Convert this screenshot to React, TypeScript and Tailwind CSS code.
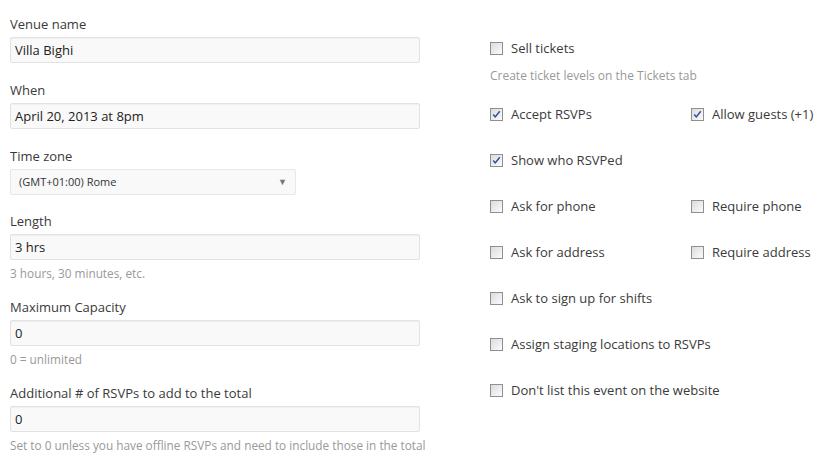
import React from 'react';

const font = { fontFamily: '"Open Sans", "Liberation Sans", sans-serif' };

interface FieldProps {
  label: string;
  value: string;
  help?: string;
}

const Field: React.FC<FieldProps> = ({ label, value, help }) => (
  <div className={help ? 'mb-[17px]' : 'mb-[18px]'}>
    <div className="text-[13px] leading-[18px] text-[#3a3a3a]">{label}</div>
    <div className="mt-[4px] h-[26px] w-[410px] rounded-[2px] border border-[#e2e2e2] bg-[#f9f9f9] px-[4px] text-[13px] leading-[24px] text-[#222] shadow-[inset_0_1px_1px_rgba(0,0,0,0.04)]">
      {value}
    </div>
    {help && (
      <div className="mt-[5px] whitespace-nowrap text-[11.8px] leading-[16px] text-[#999]">{help}</div>
    )}
  </div>
);

const Box: React.FC<{ checked?: boolean }> = ({ checked }) => (
  <span className="relative inline-block h-[13px] w-[13px] shrink-0 border border-[#8f8f8f] bg-gradient-to-br from-[#dcdcdc] to-[#fbfbfb]">
    {checked && (
      <svg viewBox="0 0 11 11" className="absolute left-[1px] top-[1px] h-[9px] w-[9px]">
        <path d="M1.5 5.5 L4 8.5 L9.5 1.5" fill="none" stroke="#2c4fa0" strokeWidth="1.8" />
      </svg>
    )}
  </span>
);

const Check: React.FC<{ label: string; checked?: boolean }> = ({ label, checked }) => (
  <div className="flex h-[18px] items-center">
    <Box checked={checked} />
    <span className="ml-[8px] text-[13px] leading-[18px] text-[#3a3a3a]">{label}</span>
  </div>
);

const Row: React.FC<{ children: React.ReactNode }> = ({ children }) => (
  <div className="mt-[28px] flex">{children}</div>
);

export default function App() {
  return (
    <div className="flex min-h-[470px] bg-white px-[10px] pt-[15px]" style={font}>
      <div className="w-[410px]">
        <Field label="Venue name" value="Villa Bighi" />
        <Field label="When" value="April 20, 2013 at 8pm" />
        <div className="mb-[17px]">
          <div className="text-[13px] leading-[18px] text-[#3a3a3a]">Time zone</div>
          <div className="mt-[4px] flex h-[26px] w-[286px] items-center justify-between rounded-[2px] border border-[#e8e8e8] bg-[#f9f9f9] pl-[8px] pr-[8px]">
            <span className="text-[11px] text-[#333]">(GMT+01:00) Rome</span>
            <span className="text-[9px] text-[#777]">▼</span>
          </div>
        </div>
        <Field label="Length" value="3 hrs" help="3 hours, 30 minutes, etc." />
        <Field label="Maximum Capacity" value="0" help="0 = unlimited" />
        <Field
          label="Additional # of RSVPs to add to the total"
          value="0"
          help="Set to 0 unless you have offline RSVPs and need to include those in the total"
        />
      </div>
      <div className="ml-[70px] pt-[24px]">
        <Check label="Sell tickets" />
        <div className="mt-[10px] text-[12px] leading-[18px] text-[#999]">Create ticket levels on the Tickets tab</div>
        <div className="mt-[20px] flex">
          <div className="w-[201px]"><Check label="Accept RSVPs" checked /></div>
          <Check label="Allow guests (+1)" checked />
        </div>
        <Row><Check label="Show who RSVPed" checked /></Row>
        <Row>
          <div className="w-[201px]"><Check label="Ask for phone" /></div>
          <Check label="Require phone" />
        </Row>
        <Row>
          <div className="w-[201px]"><Check label="Ask for address" /></div>
          <Check label="Require address" />
        </Row>
        <Row><Check label="Ask to sign up for shifts" /></Row>
        <Row><Check label="Assign staging locations to RSVPs" /></Row>
        <Row><Check label="Don't list this event on the website" /></Row>
      </div>
    </div>
  );
}
